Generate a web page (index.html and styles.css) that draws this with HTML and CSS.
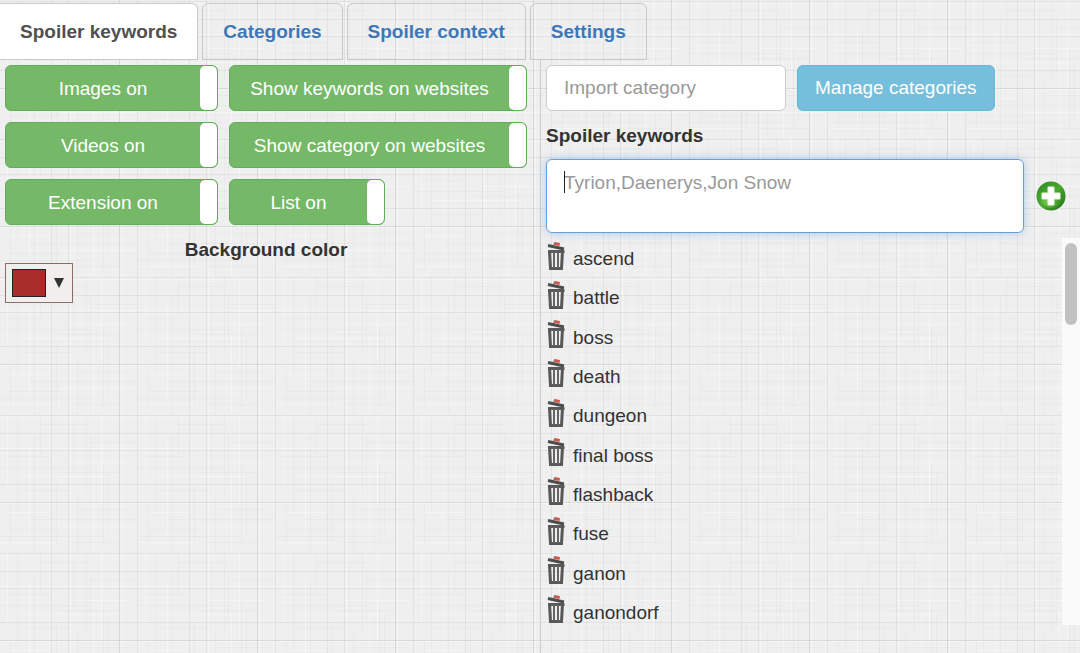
FILE: index.html
```html
<!DOCTYPE html>
<html lang="en">
<head>
  <meta charset="UTF-8" />
  <meta name="viewport" content="width=device-width, initial-scale=1" />
  <title>Spoiler keywords</title>
  <link rel="stylesheet" href="styles.css">
</head>
<body>

  <svg class="sprite" aria-hidden="true">
    <symbol id="trash" viewBox="0 0 20 30">
      <path d="M8.500 1 L14 2 L13.500 5 L8 4 Z" fill="#d0564c"/>
      <path d="M7.500 4.500 L8.500 1.500" stroke="#777" stroke-width="1" fill="none"/>
      <path d="M2 4.500 L18 8" stroke="#4c4c4c" stroke-width="3" fill="none"/>
      <path d="M2 10.500 H18.500" stroke="#5a5a5a" stroke-width="3" fill="none"/>
      <path d="M3.500 10 L4.500 27.500 H15.500 L16.500 10" stroke="#585858" stroke-width="3" fill="none"/>
      <path d="M8 11 V27 M12 11 V27" stroke="#666" stroke-width="2" fill="none"/>
    </symbol>
  </svg>

  <nav class="tabs">
    <a class="tab active" href="#keywords">Spoiler keywords</a>
    <a class="tab" href="#categories">Categories</a>
    <a class="tab" href="#context">Spoiler context</a>
    <a class="tab" href="#settings">Settings</a>
  </nav>

  <main class="columns">
    <section class="options">
      <div class="toggles">
        <label class="toggle"><input type="checkbox" checked><span class="toggle-text">Images on</span><span class="handle"></span></label>
        <label class="toggle"><input type="checkbox" checked><span class="toggle-text">Show keywords on websites</span><span class="handle"></span></label>
        <label class="toggle"><input type="checkbox" checked><span class="toggle-text">Videos on</span><span class="handle"></span></label>
        <label class="toggle"><input type="checkbox" checked><span class="toggle-text">Show category on websites</span><span class="handle"></span></label>
        <label class="toggle"><input type="checkbox" checked><span class="toggle-text">Extension on</span><span class="handle"></span></label>
        <label class="toggle small"><input type="checkbox" checked><span class="toggle-text">List on</span><span class="handle"></span></label>
      </div>
      <h2 class="title centered" id="color-title">Background color</h2>
      <button class="picker" type="button" aria-labelledby="color-title">
        <span class="swatch"></span>
        <svg class="arrow" viewBox="0 0 10 10"><path d="M0 0 H10 L5 10 Z" fill="#333"/></svg>
      </button>
    </section>

    <section class="keywords" id="keywords">
      <div class="import-row">
        <input class="field import" type="text" placeholder="Import category" aria-label="Import category">
        <button class="manage" type="button">Manage categories</button>
      </div>
      <label class="title" for="words">Spoiler keywords</label>
      <div class="add-row">
        <div class="words-box">
          <textarea class="field words" id="words" rows="2" placeholder="Tyrion,Daenerys,Jon Snow"></textarea>
          <span class="caret"></span>
        </div>
        <button class="add" type="button" aria-label="Add">
          <svg viewBox="0 0 30 30" width="30" height="30">
            <defs>
              <linearGradient id="green" x1="0" y1="0" x2="1" y2="1">
                <stop offset="0" stop-color="#2f8a26"/>
                <stop offset="0.500" stop-color="#4aa82f"/>
                <stop offset="1" stop-color="#1f6e18"/>
              </linearGradient>
              <radialGradient id="glow" cx="0.400" cy="0.700" r="0.600">
                <stop offset="0" stop-color="#86d94a"/>
                <stop offset="1" stop-color="#3ea526" stop-opacity="0"/>
              </radialGradient>
            </defs>
            <circle cx="15" cy="15" r="14.500" fill="url(#green)"/>
            <circle cx="15" cy="15" r="12" fill="url(#glow)"/>
            <path d="M12 6 H18 V12 H24 V18 H18 V24 H12 V18 H6 V12 H12 Z" fill="#fff" stroke="#e6f5df"/>
          </svg>
        </button>
      </div>
      <div class="list-box">
        <ul class="list">
          <li><button type="button" aria-label="Delete ascend"><svg class="trash"><use href="#trash"/></svg></button>ascend</li>
          <li><button type="button" aria-label="Delete battle"><svg class="trash"><use href="#trash"/></svg></button>battle</li>
          <li><button type="button" aria-label="Delete boss"><svg class="trash"><use href="#trash"/></svg></button>boss</li>
          <li><button type="button" aria-label="Delete death"><svg class="trash"><use href="#trash"/></svg></button>death</li>
          <li><button type="button" aria-label="Delete dungeon"><svg class="trash"><use href="#trash"/></svg></button>dungeon</li>
          <li><button type="button" aria-label="Delete final boss"><svg class="trash"><use href="#trash"/></svg></button>final boss</li>
          <li><button type="button" aria-label="Delete flashback"><svg class="trash"><use href="#trash"/></svg></button>flashback</li>
          <li><button type="button" aria-label="Delete fuse"><svg class="trash"><use href="#trash"/></svg></button>fuse</li>
          <li><button type="button" aria-label="Delete ganon"><svg class="trash"><use href="#trash"/></svg></button>ganon</li>
          <li><button type="button" aria-label="Delete ganondorf"><svg class="trash"><use href="#trash"/></svg></button>ganondorf</li>
        </ul>
        <div class="scrollbar"><div class="thumb"></div></div>
      </div>
    </section>
  </main>

</body>
</html>
```
FILE: styles.css
```css
* {
  box-sizing: border-box;
}

body {
  margin: 0;
  min-height: 100vh;
  display: flex;
  flex-direction: column;
  font-family: "Liberation Sans", Arial, sans-serif;
  font-size: 19px;
  line-height: 26px;
  color: #333;
  background-color: #efefef;
  /* woven paper tile */
  background-image: url("data:image/svg+xml,%3Csvg xmlns='http://www.w3.org/2000/svg' width='138' height='138'%3E%3Cg fill='none' stroke='%23fff' stroke-opacity='.4'%3E%3Cpath d='M121.5 0V138M70.500 0V138M93.500 60V138M7.500 0V70M29.500 30V120M101.500 0V90M0 89.500H138M0 3.500H138M0 34.500H138M20 62.500H110M60 112.500H138M0 128.500H60M70 48.500H130M10 98.500H50'/%3E%3C/g%3E%3Cg fill='none' stroke='%23777'%3E%3Cpath stroke-opacity='.19' d='M119.500 0V138M0 88.500H138'/%3E%3Cpath stroke-opacity='.11' d='M51.500 0V138M68.500 0V138M137.500 0V138M0 1.500H138M0 19.500H138M0 36.500H138M0 70.500H138'/%3E%3Cpath stroke-opacity='.05' d='M17.500 0V100M34.500 20V138M86.500 0V80M103.500 50V130M0 53.500H90M30 105.500H138M0 122.500H100M56.500 70V130M73.500 10V60M77.500 80V138M40.500 0V40M10.500 90V130M90.500 20V70M108.500 60V120M5 42.500H50M60 58.500H120M20 76.500H70M80 95.500H130M10 115.500H60M70 128.500H120M90 28.500H138M40 10.500H90'/%3E%3C/g%3E%3C/svg%3E");
}

button,
input,
textarea {
  font: inherit;
}

.sprite {
  display: none;
}

.tabs {
  display: flex;
  gap: 4px;
  padding-top: 3px;
}

.tab {
  padding: 14px 20px;
  border: 1px solid #c8c8c8;
  border-radius: 6px 6px 0 0;
  color: #3c78b9;
  font-weight: bold;
  line-height: 27px;
  text-decoration: none;
}

.tab.active {
  border-left: none;
  border-top-left-radius: 0;
  background: #fff;
  color: #505050;
}

.columns {
  flex: 1;
  display: grid;
  grid-template-columns: 1fr 1fr;
}

.options {
  padding: 5px 13px 0 5px;
}

.toggles {
  display: grid;
  grid-template-columns: 213px 1fr;
  gap: 11px;
}

.toggle {
  display: flex;
  height: 46px;
  border: 1px solid #5cb056;
  border-radius: 6px;
  background: #75b868;
  color: #fff;
  overflow: hidden;
  cursor: pointer;
}

.toggle.small {
  width: 156px;
}

.toggle input {
  appearance: none;
  width: 0;
  margin: 0;
}

.toggle-text {
  flex: 1;
  line-height: 45px;
  text-align: center;
}

.handle {
  width: 17px;
  border-radius: 5px;
  background: #fff;
}

.title {
  display: block;
  margin: 12px 0 10px;
  font-size: 19px;
  font-weight: bold;
}

.title.centered {
  margin: 12px 0 0;
  text-align: center;
}

.picker {
  display: flex;
  align-items: center;
  gap: 8px;
  width: 68px;
  height: 40px;
  padding: 0 6px;
  border: 1px solid #8c6f62;
  background: #f1efee;
}

.swatch {
  width: 34px;
  height: 28px;
  border: 1px solid #222;
  background: #a92d28;
}

.arrow {
  width: 10px;
  height: 10px;
}

.keywords {
  display: flex;
  flex-direction: column;
  padding: 5px 0 0 5px;
  border-left: 1px solid #ccc;
}

.import-row {
  display: flex;
  gap: 11px;
}

.field {
  border: 1px solid #ccc;
  border-radius: 6px;
  background: #fff;
  padding: 10px 17px;
  color: #555;
}

.field::placeholder {
  color: #999;
  opacity: 1;
}

.import {
  width: 240px;
  height: 46px;
}

.manage {
  height: 46px;
  padding: 0 17px;
  border: 1px solid #66b8d8;
  border-radius: 6px;
  background: #75bedc;
  color: #fff;
}

.add-row {
  display: flex;
  align-items: center;
  gap: 12px;
  padding-right: 14px;
}

.words-box {
  flex: 1;
  position: relative;
  height: 74px;
}

.words {
  display: block;
  width: 100%;
  height: 74px;
  border-color: #66a0dc;
  box-shadow: 0 0 10px rgba(102, 165, 233, 0.5);
  resize: none;
  outline: none;
}

.caret {
  position: absolute;
  left: 18px;
  top: 12px;
  width: 1px;
  height: 22px;
  background: #222;
}

.add {
  padding: 0;
  border: none;
  background: none;
}

.add svg {
  display: block;
}

.list-box {
  flex: 1;
  display: flex;
  margin: 5px 0 28px;
}

.list {
  flex: 1;
  display: flex;
  flex-direction: column;
  justify-content: space-between;
  margin: 0;
  padding: 7px 0 0;
  list-style: none;
}

.list li {
  display: flex;
  gap: 7px;
  height: 26px;
  line-height: 28px;
}

.list button {
  margin-top: -5px;
  padding: 0;
  border: none;
  background: none;
}

.trash {
  display: block;
  width: 20px;
  height: 30px;
}

.scrollbar {
  width: 18px;
  padding: 5px 3px;
  background: #fafafa;
}

.thumb {
  height: 82px;
  border-radius: 6px;
  background: #c1c1c1;
}
```
